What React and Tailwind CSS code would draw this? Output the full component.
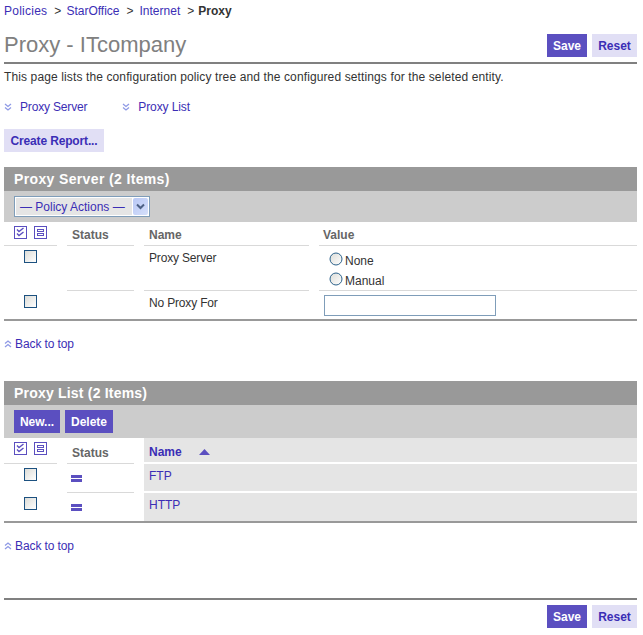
const LINK = "text-[#3b2eb5]";

function Chevrons({ up = false }) {
  return (
    <svg width="8" height="8" viewBox="0 0 8 8" fill="none" stroke="#8f9ae6" strokeWidth="1.3" className="shrink-0">
      {up ? (
        <>
          <path d="M1 3.5 L4 1 L7 3.5" />
          <path d="M1 7 L4 4.5 L7 7" />
        </>
      ) : (
        <>
          <path d="M1 1 L4 3.5 L7 1" />
          <path d="M1 4.5 L4 7 L7 4.5" />
        </>
      )}
    </svg>
  );
}

function Btn({ children, primary, className = "" }) {
  return (
    <button
      className={`h-[23px] font-bold text-[12px] flex items-center justify-center ${
        primary ? "bg-[#5b4fc0] text-white" : "bg-[#e1dff5] text-[#3b2eb5]"
      } ${className}`}
    >
      {children}
    </button>
  );
}

function Check() {
  return (
    <span className="block w-[13px] h-[13px] border border-[#1c5180] bg-gradient-to-br from-[#dcdcd7] to-[#ffffff]" />
  );
}

function Radio({ label }) {
  return (
    <div className="flex items-center h-[20px] text-[#333]">
      <svg width="14" height="14" viewBox="0 0 14 14" className="shrink-0">
        <defs>
          <linearGradient id="rg" x1="0" y1="0" x2="1" y2="1">
            <stop offset="0" stopColor="#dcdcd7" />
            <stop offset="1" stopColor="#ffffff" />
          </linearGradient>
        </defs>
        <circle cx="7" cy="7" r="6" fill="url(#rg)" stroke="#2c628b" strokeWidth="1" />
      </svg>
      <span className="ml-[2px] mt-[3px]">{label}</span>
    </div>
  );
}

function SelectAllIcons() {
  return (
    <div className="flex gap-[7px] pl-[10px] pt-[4px]">
      <svg width="13" height="13" viewBox="0 0 13 13" fill="none" stroke="#5b4fc0">
        <rect x="0.5" y="0.5" width="12" height="12" />
        <path d="M3 3.5 L5 5.5 L9.5 2" strokeWidth="1.4" />
        <path d="M3 7.5 L5 9.5 L9.5 6" strokeWidth="1.4" />
      </svg>
      <svg width="13" height="13" viewBox="0 0 13 13" fill="none" stroke="#5b4fc0">
        <rect x="0.5" y="0.5" width="12" height="12" />
        <rect x="3.5" y="3.5" width="6" height="2" />
        <rect x="3.5" y="7.5" width="6" height="2" />
      </svg>
    </div>
  );
}

function Equal() {
  return (
    <div className="pl-[4px] pt-[11px]">
      <div className="w-[11px] h-[3px] bg-[#5b4fc0]" />
      <div className="w-[11px] h-[3px] bg-[#5b4fc0] mt-[1px]" />
    </div>
  );
}

function SectionHead({ children, className = "" }) {
  return (
    <div className={`h-[24px] bg-[#999999] text-white font-bold text-[14px] leading-[24px] pl-[10px] ${className}`}>
      {children}
    </div>
  );
}

function BackToTop({ className = "" }) {
  return (
    <div className={`flex items-center gap-[3px] h-[14px] ${className}`}>
      <Chevrons up />
      <a className={`${LINK} tracking-[-0.1px]`}>Back to top</a>
    </div>
  );
}

export default function App() {
  return (
    <div
      className="w-[633px] ml-[4px] h-[635px] text-[12px] leading-[14px] text-[#333]"
      style={{ fontFamily: '"Liberation Sans", Arial, sans-serif' }}
    >
      <div className="flex items-center h-[14px] mt-[4px]">
        <a className={`${LINK} tracking-[0.25px]`}>Policies</a>
        <span className="ml-[7px] mr-[5px]">&gt;</span>
        <a className={LINK}>StarOffice</a>
        <span className="ml-[7px] mr-[6px]">&gt;</span>
        <a className={LINK}>Internet</a>
        <span className="ml-[7px] mr-[4px]">&gt;</span>
        <b>Proxy</b>
      </div>

      <div className="flex items-end justify-between h-[38px] mt-[1px]">
        <h1 className="text-[22px] leading-[26px] text-[#808080] font-normal -mb-[1px]">Proxy - ITcompany</h1>
        <div className="flex gap-[5px]">
          <Btn primary className="w-[40px]">Save</Btn>
          <Btn className="w-[45px]">Reset</Btn>
        </div>
      </div>
      <div className="h-[2px] bg-[#808080] mt-[5px]" />

      <p className="mt-[6px] tracking-[0.12px]">This page lists the configuration policy tree and the configured settings for the seleted entity.</p>

      <div className="flex mt-[16px] h-[14px] items-center">
        <Chevrons />
        <a className={`${LINK} ml-[8px] tracking-[-0.17px]`}>Proxy Server</a>
        <span className="ml-[35px]"><Chevrons /></span>
        <a className={`${LINK} ml-[8px] tracking-[-0.1px]`}>Proxy List</a>
      </div>

      <Btn className="w-[100px] mt-[15px] tracking-[-0.15px]">Create Report...</Btn>

      <div className="mt-[15px]">
        <SectionHead className="tracking-[0.36px]">Proxy Server (2 Items)</SectionHead>
        <div className="h-[31px] bg-[#cccccc] flex items-center pl-[10px]">
          <div className="w-[136px] h-[21px] border border-[#7f9db9] bg-white p-[1px] flex">
            <div className="flex-1 bg-[#e5e5e5] text-[#3b2eb5] pl-[4px] leading-[19px]">— Policy Actions —</div>
            <div className="w-[15px] ml-[1px] rounded-[2px] bg-gradient-to-br from-[#b9c8f5] to-[#d5dffa] flex items-center justify-center">
              <svg width="9" height="7" viewBox="0 0 9 7" fill="none" stroke="#4d6185" strokeWidth="2">
                <path d="M1 1.5 L4.5 5 L8 1.5" />
              </svg>
            </div>
          </div>
        </div>

        <div className="grid grid-cols-[53px_67px_165px_318px] gap-x-[10px] border-b-2 border-[#999999]">
          <div className="h-[24px] border-b border-[#d9d9d9]"><SelectAllIcons /></div>
          <div className="h-[24px] border-b border-[#d9d9d9] pl-[5px] pt-[6px] font-bold text-[#666]">Status</div>
          <div className="h-[24px] border-b border-[#d9d9d9] pl-[5px] pt-[6px] font-bold text-[#666]">Name</div>
          <div className="h-[24px] border-b border-[#d9d9d9] pl-[4px] pt-[6px] font-bold text-[#666]">Value</div>

          <div className="h-[45px] pl-[20px] pt-[4px]"><Check /></div>
          <div className="h-[45px] border-b border-[#d9d9d9]" />
          <div className="h-[45px] border-b border-[#d9d9d9] pl-[5px] pt-[5px] tracking-[-0.17px]">Proxy Server</div>
          <div className="h-[45px] border-b border-[#d9d9d9] pl-[10px] pt-[3px]">
            <Radio label="None" />
            <Radio label="Manual" />
          </div>

          <div className="h-[28px] pl-[20px] pt-[4px]"><Check /></div>
          <div className="h-[28px]" />
          <div className="h-[28px] pl-[5px] pt-[5px] tracking-[-0.17px]">No Proxy For</div>
          <div className="h-[28px] pl-[5px] pt-[4px]">
            <input className="block w-[172px] h-[21px] border border-[#7f9db9] bg-white" />
          </div>
        </div>
      </div>

      <BackToTop className="mt-[16px]" />

      <div className="mt-[30px]">
        <SectionHead className="tracking-[0.2px]">Proxy List (2 Items)</SectionHead>
        <div className="h-[33px] bg-[#cccccc] flex items-center pl-[10px] gap-[5px]">
          <Btn primary className="w-[46px]">New...</Btn>
          <Btn primary className="w-[48px]">Delete</Btn>
        </div>

        <div className="grid grid-cols-[53px_67px_493px] gap-x-[10px] border-b-2 border-[#999999]">
          <div className="h-[26px] border-b border-[#d9d9d9]"><SelectAllIcons /></div>
          <div className="h-[26px] border-b border-[#d9d9d9] pl-[5px] pt-[8px] font-bold text-[#666]">Status</div>
          <div className="h-[26px]">
            <div className="h-[24px] bg-[#e5e5e5] flex items-center pl-[5px] pt-[3px] font-bold text-[#3b2eb5]">
              Name
              <svg width="11" height="7" viewBox="0 0 11 7" className="ml-[17px] mt-[2px]">
                <path d="M5.5 0 L11 6 H0 Z" fill="#5b4fc0" />
              </svg>
            </div>
          </div>

          <div className="h-[29px] pl-[20px] pt-[4px]"><Check /></div>
          <div className="h-[29px] border-b border-[#d9d9d9]"><Equal /></div>
          <div className="h-[29px] border-b-2 border-white bg-[#e5e5e5] pl-[5px] pt-[5px] text-[#3b2eb5]">FTP</div>

          <div className="h-[28px] pl-[20px] pt-[4px]"><Check /></div>
          <div className="h-[28px]"><Equal /></div>
          <div className="h-[28px] bg-[#e5e5e5] pl-[5px] pt-[5px] text-[#3b2eb5]">HTTP</div>
        </div>
      </div>

      <BackToTop className="mt-[16px]" />

      <div className="h-[2px] bg-[#808080] mt-[45px]" />
      <div className="flex justify-end gap-[5px] mt-[5px]">
        <Btn primary className="w-[40px]">Save</Btn>
        <Btn className="w-[45px]">Reset</Btn>
      </div>
    </div>
  );
}
